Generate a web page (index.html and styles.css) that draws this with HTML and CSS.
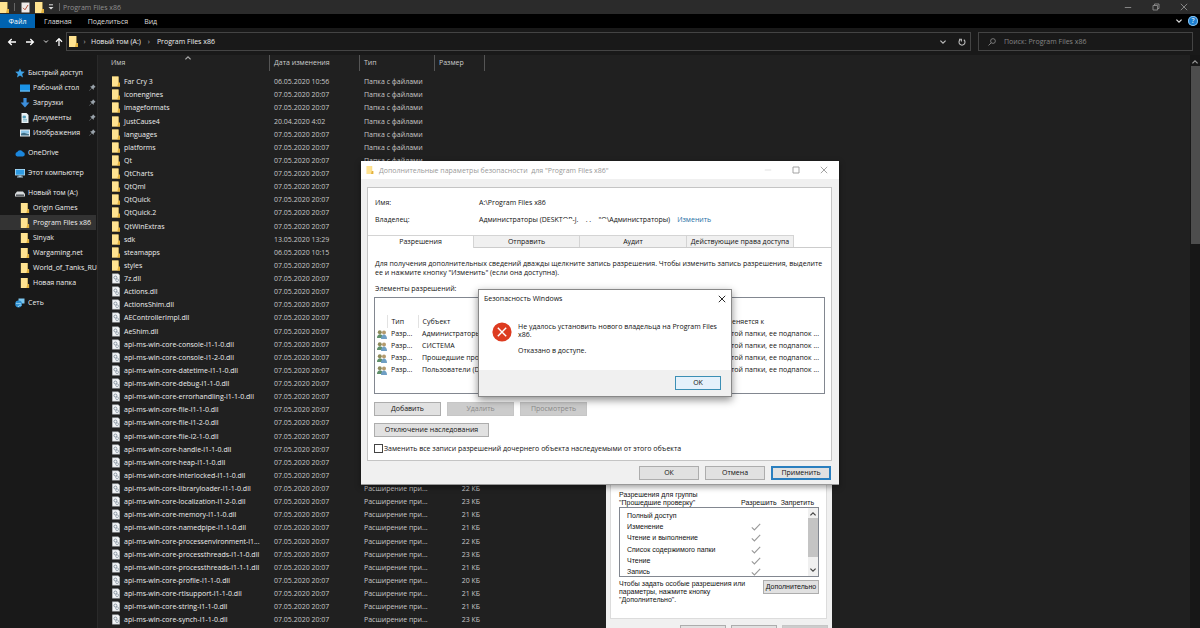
FILE: index.html
```html
<!DOCTYPE html>
<html lang="ru">
<head>
<meta charset="utf-8">
<title>Program Files x86</title>
<link rel="stylesheet" href="styles.css">
</head>
<body>
<svg class="defs" aria-hidden="true">
  <symbol id="fo" viewBox="0 0 9 11"><path d="M0 0h7.5v7H9v4H0z" fill="#f3cf6b"/><path d="M0 0h7v11H0z" fill="#ffe391"/><path d="M7 7h2v4H6z" fill="#e3b23f"/></symbol>
  <symbol id="dl" viewBox="0 0 8 10"><path d="M.3.3h6l1.4 1.4v8H.3z" fill="#f4f6f8" stroke="#aab0b6" stroke-width=".5"/><circle cx="3.4" cy="4" r="1.5" fill="none" stroke="#7f8c99" stroke-width=".9"/><circle cx="5.1" cy="6.7" r="1.4" fill="none" stroke="#8b98a5" stroke-width=".8"/></symbol>
  <symbol id="pin" viewBox="0 0 8 8"><path d="M4.6.4 7.6 3.4 6.6 3.8 5.4 5.2 5.2 6.8 3.3 4.9.6 7.6.3 7.3 3 4.6 1.2 2.8 2.9 2.6 4.2 1.4z" fill="#9aa3ab"/></symbol>
  <symbol id="usr" viewBox="0 0 10 9"><circle cx="2.8" cy="2.2" r="2" fill="#8d8a5a"/><path d="M0 8c0-5 6-5 6 0z" fill="#5f8f6a"/><circle cx="7" cy="2.4" r="2" fill="#b49a6c"/><path d="M4 9c0-6 6-6 6 0z" fill="#6f9fc4"/></symbol>
  <symbol id="x" viewBox="0 0 8 8"><path d="M.8.8 7.2 7.2M7.2.8.8 7.2" fill="none" stroke="currentColor" stroke-width=".9"/></symbol>
  <symbol id="up" viewBox="0 0 8 6"><path d="M1.4 4.4 4 1.8 6.6 4.4" fill="none" stroke="currentColor" stroke-width="1.2"/></symbol>
  <symbol id="dn" viewBox="0 0 8 6"><path d="M1.4 1.6 4 4.2 6.6 1.6" fill="none" stroke="currentColor" stroke-width="1.2"/></symbol>
  <symbol id="ar" viewBox="0 0 10 8"><path d="M1 4h7.6M5.3 1 8.4 4 5.3 7" fill="none" stroke="currentColor" stroke-width="1.3"/></symbol>
  <symbol id="ok" viewBox="0 0 10 8"><path d="M.8 4.4 3.4 7 9.2.8" fill="none" stroke="currentColor" stroke-width="1.1"/></symbol>
</svg>

<header class="titlebar">
  <svg class="fi"><use href="#fo"/></svg><span class="bar"></span>
  <svg class="fi" viewBox="0 0 9 11"><path d="M.5.5h8v10h-8z" fill="#efeae8"/><path d="M2 5.8 4 7.8 7 3" fill="none" stroke="#b4513c" stroke-width="1"/></svg>
  <svg class="fi fi-gap"><use href="#fo"/></svg>
  <svg class="qa" viewBox="0 0 6 6"><path d="M1 .8h4" stroke="#ddd"/><path d="M.5 3h5L3 5.5z" fill="#ddd"/></svg>
  <span class="bar"></span><span class="title">Program Files x86</span>
  <div class="winbtns">
    <button aria-label="Свернуть"><svg viewBox="0 0 8 8"><path d="M.8 4.5h6.4" stroke="currentColor" stroke-width=".9"/></svg></button>
    <button aria-label="Свернуть в окно"><svg viewBox="0 0 8 8"><path d="M1 2.5h4.6V7H1zM2.5 2.5V1H7v4.5H5.6" fill="none" stroke="currentColor" stroke-width=".9"/></svg></button>
    <button aria-label="Закрыть"><svg><use href="#x"/></svg></button>
  </div>
</header>

<nav class="ribbon">
  <button class="file">Файл</button><button>Главная</button><button>Поделиться</button><button>Вид</button>
  <span class="ribbon-end"><svg class="chev"><use href="#dn"/></svg><span class="help">?</span></span>
</nav>

<div class="address">
  <div class="arrows">
    <svg class="arr flip"><use href="#ar"/></svg><svg class="arr"><use href="#ar"/></svg><svg class="chev small"><use href="#dn"/></svg><svg class="arr upw"><use href="#ar"/></svg>
  </div>
  <div class="path">
    <svg class="fi"><use href="#fo"/></svg><span class="sep">›</span><span>Новый том (A:)</span><span class="sep sep-wide">›</span><span>Program Files x86</span>
    <span class="path-end"><svg class="chev"><use href="#dn"/></svg><svg class="rf" viewBox="0 0 8 8"><path d="M2.2 1.8A3 3 0 1 0 5.8 1.8M1 1.2h2.4v2.4" fill="none" stroke="currentColor" stroke-width="1.1"/></svg></span>
  </div>
  <label class="search"><svg viewBox="0 0 9 9"><circle cx="5.6" cy="3.4" r="2.7" fill="none" stroke="#999" stroke-width=".8"/><path d="M3.6 5.4.6 8.4" stroke="#999" stroke-width=".9"/></svg><input type="text" aria-label="Поиск" placeholder="Поиск: Program Files x86"></label>
</div>

<main class="main">
  <aside class="side">
    <ul>
      <li><svg class="si" viewBox="0 0 10 10"><path d="M5 .4 6.4 3.5 9.8 3.8 7.2 6 8 9.4 5 7.6 2 9.4 2.8 6 .2 3.8 3.6 3.5z" fill="#3fa3e8"/></svg>Быстрый доступ</li>
      <li class="sub"><svg class="si" viewBox="0 0 10 10"><path d="M0 1.5h10v7H0z" fill="#1b93e6"/><path d="M0 7.5h10v1H0z" fill="#7ec6f5"/></svg>Рабочий стол<svg class="pin"><use href="#pin"/></svg></li>
      <li class="sub"><svg class="si" viewBox="0 0 10 10"><path d="M3.4 0h3.2v4.5H9.4L5 9.6.6 4.5h2.8z" fill="#3c8edb"/></svg>Загрузки<svg class="pin"><use href="#pin"/></svg></li>
      <li class="sub"><svg class="si" viewBox="0 0 10 10"><path d="M1.5 0h5l2 2v8h-7z" fill="#e9f1f4"/><path d="M3 3h2.5v2H3zM3 6.4h4M3 8h4" fill="#4f9cc0" stroke="#5aa0b8" stroke-width=".7"/></svg>Документы<svg class="pin"><use href="#pin"/></svg></li>
      <li class="sub"><svg class="si" viewBox="0 0 10 10"><path d="M0 1.5h10v7H0z" fill="#e6eef2"/><path d="M1 2.5h8v3H1z" fill="#8cc6e8"/><path d="M1 7.5V5.5l3-.8 5 1.6v1.2z" fill="#3f6f88"/></svg>Изображения<svg class="pin"><use href="#pin"/></svg></li>
    </ul>
    <ul><li><svg class="si" viewBox="0 0 10 10"><path d="M2.2 8.4a2.2 2.2 0 0 1 0-4.3 3.2 3.2 0 0 1 5.8-.2 2.3 2.3 0 0 1 0 4.5z" fill="#1b86dc"/></svg>OneDrive</li></ul>
    <ul><li><svg class="si" viewBox="0 0 10 10"><path d="M0 1h10v6.4H0z" fill="#bfe3f7"/><path d="M.7 1.7h8.6v5H.7z" fill="#2f9be2"/><path d="M3.5 7.4h3v1.2h-3zM2 8.6h6v.8H2z" fill="#a8c6d8"/></svg>Этот компьютер</li></ul>
    <ul>
      <li><svg class="si" viewBox="0 0 10 10"><path d="M2 3.5h6l2 2.5v2.6H0V6z" fill="#d7dadc"/><path d="M1 6.5h8v1.4H1z" fill="#4b5054"/></svg>Новый том (A:)</li>
      <li class="sub"><svg class="si"><use href="#fo"/></svg>Origin Games</li>
      <li class="sub on"><svg class="si"><use href="#fo"/></svg>Program Files x86</li>
      <li class="sub"><svg class="si"><use href="#fo"/></svg>Sinyak</li>
      <li class="sub"><svg class="si"><use href="#fo"/></svg>Wargaming.net</li>
      <li class="sub"><svg class="si"><use href="#fo"/></svg>World_of_Tanks_RU</li>
      <li class="sub"><svg class="si"><use href="#fo"/></svg>Новая папка</li>
    </ul>
    <ul><li><svg class="si" viewBox="0 0 10 10"><path d="M3.5.5h6v5h-6z" fill="#7cc7f0"/><circle cx="3.6" cy="6" r="3.4" fill="#2e8fd0"/><path d="M1 5.2c2 1 3.5-.5 5 .8M3 9c1-2 2-2 3.4-1.6" fill="none" stroke="#bfe6fa" stroke-width=".8"/></svg>Сеть</li></ul>
  </aside>

  <section class="files">
    <table class="list">
      <thead><tr><th class="c1">Имя<svg class="sort"><use href="#up"/></svg></th><th class="c2">Дата изменения</th><th class="c3">Тип</th><th class="c4">Размер</th></tr></thead>
      <tbody>
      <tr><td><svg><use href="#fo"/></svg>Far Cry 3</td><td>06.05.2020 10:56</td><td>Папка с файлами</td><td></td></tr>
      <tr><td><svg><use href="#fo"/></svg>iconengines</td><td>07.05.2020 20:07</td><td>Папка с файлами</td><td></td></tr>
      <tr><td><svg><use href="#fo"/></svg>imageformats</td><td>07.05.2020 20:07</td><td>Папка с файлами</td><td></td></tr>
      <tr><td><svg><use href="#fo"/></svg>JustCause4</td><td>20.04.2020 4:02</td><td>Папка с файлами</td><td></td></tr>
      <tr><td><svg><use href="#fo"/></svg>languages</td><td>07.05.2020 20:07</td><td>Папка с файлами</td><td></td></tr>
      <tr><td><svg><use href="#fo"/></svg>platforms</td><td>07.05.2020 20:07</td><td>Папка с файлами</td><td></td></tr>
      <tr><td><svg><use href="#fo"/></svg>Qt</td><td>07.05.2020 20:07</td><td>Папка с файлами</td><td></td></tr>
      <tr><td><svg><use href="#fo"/></svg>QtCharts</td><td>07.05.2020 20:07</td><td></td><td></td></tr>
      <tr><td><svg><use href="#fo"/></svg>QtQml</td><td>07.05.2020 20:07</td><td></td><td></td></tr>
      <tr><td><svg><use href="#fo"/></svg>QtQuick</td><td>07.05.2020 20:07</td><td></td><td></td></tr>
      <tr><td><svg><use href="#fo"/></svg>QtQuick.2</td><td>07.05.2020 20:07</td><td></td><td></td></tr>
      <tr><td><svg><use href="#fo"/></svg>QtWinExtras</td><td>07.05.2020 20:07</td><td></td><td></td></tr>
      <tr><td><svg><use href="#fo"/></svg>sdk</td><td>13.05.2020 13:29</td><td></td><td></td></tr>
      <tr><td><svg><use href="#fo"/></svg>steamapps</td><td>06.05.2020 10:15</td><td></td><td></td></tr>
      <tr><td><svg><use href="#fo"/></svg>styles</td><td>07.05.2020 20:07</td><td></td><td></td></tr>
      <tr><td><svg><use href="#dl"/></svg>7z.dll</td><td>07.05.2020 20:07</td><td></td><td></td></tr>
      <tr><td><svg><use href="#dl"/></svg>Actions.dll</td><td>07.05.2020 20:07</td><td></td><td></td></tr>
      <tr><td><svg><use href="#dl"/></svg>ActionsShim.dll</td><td>07.05.2020 20:07</td><td></td><td></td></tr>
      <tr><td><svg><use href="#dl"/></svg>AEControllerImpl.dll</td><td>07.05.2020 20:07</td><td></td><td></td></tr>
      <tr><td><svg><use href="#dl"/></svg>AeShim.dll</td><td>07.05.2020 20:07</td><td></td><td></td></tr>
      <tr><td><svg><use href="#dl"/></svg>api-ms-win-core-console-l1-1-0.dll</td><td>07.05.2020 20:07</td><td></td><td></td></tr>
      <tr><td><svg><use href="#dl"/></svg>api-ms-win-core-console-l1-2-0.dll</td><td>07.05.2020 20:07</td><td></td><td></td></tr>
      <tr><td><svg><use href="#dl"/></svg>api-ms-win-core-datetime-l1-1-0.dll</td><td>07.05.2020 20:07</td><td></td><td></td></tr>
      <tr><td><svg><use href="#dl"/></svg>api-ms-win-core-debug-l1-1-0.dll</td><td>07.05.2020 20:07</td><td></td><td></td></tr>
      <tr><td><svg><use href="#dl"/></svg>api-ms-win-core-errorhandling-l1-1-0.dll</td><td>07.05.2020 20:07</td><td></td><td></td></tr>
      <tr><td><svg><use href="#dl"/></svg>api-ms-win-core-file-l1-1-0.dll</td><td>07.05.2020 20:07</td><td></td><td></td></tr>
      <tr><td><svg><use href="#dl"/></svg>api-ms-win-core-file-l1-2-0.dll</td><td>07.05.2020 20:07</td><td></td><td></td></tr>
      <tr><td><svg><use href="#dl"/></svg>api-ms-win-core-file-l2-1-0.dll</td><td>07.05.2020 20:07</td><td></td><td></td></tr>
      <tr><td><svg><use href="#dl"/></svg>api-ms-win-core-handle-l1-1-0.dll</td><td>07.05.2020 20:07</td><td></td><td></td></tr>
      <tr><td><svg><use href="#dl"/></svg>api-ms-win-core-heap-l1-1-0.dll</td><td>07.05.2020 20:07</td><td></td><td></td></tr>
      <tr><td><svg><use href="#dl"/></svg>api-ms-win-core-interlocked-l1-1-0.dll</td><td>07.05.2020 20:07</td><td></td><td></td></tr>
      <tr><td><svg><use href="#dl"/></svg>api-ms-win-core-libraryloader-l1-1-0.dll</td><td>07.05.2020 20:07</td><td>Расширение при...</td><td>22 КБ</td></tr>
      <tr><td><svg><use href="#dl"/></svg>api-ms-win-core-localization-l1-2-0.dll</td><td>07.05.2020 20:07</td><td>Расширение при...</td><td>23 КБ</td></tr>
      <tr><td><svg><use href="#dl"/></svg>api-ms-win-core-memory-l1-1-0.dll</td><td>07.05.2020 20:07</td><td>Расширение при...</td><td>21 КБ</td></tr>
      <tr><td><svg><use href="#dl"/></svg>api-ms-win-core-namedpipe-l1-1-0.dll</td><td>07.05.2020 20:07</td><td>Расширение при...</td><td>21 КБ</td></tr>
      <tr><td><svg><use href="#dl"/></svg>api-ms-win-core-processenvironment-l1...</td><td>07.05.2020 20:07</td><td>Расширение при...</td><td>22 КБ</td></tr>
      <tr><td><svg><use href="#dl"/></svg>api-ms-win-core-processthreads-l1-1-0.dll</td><td>07.05.2020 20:07</td><td>Расширение при...</td><td>23 КБ</td></tr>
      <tr><td><svg><use href="#dl"/></svg>api-ms-win-core-processthreads-l1-1-1.dll</td><td>07.05.2020 20:07</td><td>Расширение при...</td><td>21 КБ</td></tr>
      <tr><td><svg><use href="#dl"/></svg>api-ms-win-core-profile-l1-1-0.dll</td><td>07.05.2020 20:07</td><td>Расширение при...</td><td>20 КБ</td></tr>
      <tr><td><svg><use href="#dl"/></svg>api-ms-win-core-rtlsupport-l1-1-0.dll</td><td>07.05.2020 20:07</td><td>Расширение при...</td><td>21 КБ</td></tr>
      <tr><td><svg><use href="#dl"/></svg>api-ms-win-core-string-l1-1-0.dll</td><td>07.05.2020 20:07</td><td>Расширение при...</td><td>21 КБ</td></tr>
      <tr><td><svg><use href="#dl"/></svg>api-ms-win-core-synch-l1-1-0.dll</td><td>07.05.2020 20:07</td><td>Расширение при...</td><td>23 КБ</td></tr>
      </tbody>
    </table>
  </section>
  <div class="scroll"><svg class="chev"><use href="#up"/></svg><div class="thumb"></div></div>
</main>

<section class="win props">
  <div class="props-page">
    <div class="props-head"><p>Разрешения для группы<br>"Прошедшие проверку"</p><span>Разрешить</span><span>Запретить</span></div>
    <div class="perm">
      <ul>
        <li>Полный доступ</li>
        <li>Изменение<svg><use href="#ok"/></svg></li>
        <li>Чтение и выполнение<svg><use href="#ok"/></svg></li>
        <li>Список содержимого папки<svg><use href="#ok"/></svg></li>
        <li>Чтение<svg><use href="#ok"/></svg></li>
        <li>Запись<svg><use href="#ok"/></svg></li>
      </ul>
      <div class="perm-scroll"><svg class="chev"><use href="#up"/></svg><div class="perm-thumb"></div><svg class="chev"><use href="#dn"/></svg></div>
    </div>
    <div class="props-more"><p>Чтобы задать особые разрешения или<br>параметры, нажмите кнопку<br>"Дополнительно".</p><button class="btn">Дополнительно</button></div>
  </div>
  <div class="props-foot"><button class="btn" aria-label="ОК"></button><button class="btn" aria-label="Отмена"></button><button class="btn off" aria-label="Применить" disabled></button></div>
</section>

<section class="win adv">
  <div class="adv-title"><svg class="fi"><use href="#fo"/></svg><span>Дополнительные параметры безопасности&nbsp; для "Program Files x86"</span>
    <div class="winbtns">
      <button aria-label="Свернуть" class="faint"><svg viewBox="0 0 8 8"><path d="M.8 4h6.4" stroke="currentColor" stroke-width=".8"/></svg></button>
      <button aria-label="Развернуть"><svg viewBox="0 0 8 8"><path d="M1 1h6v6H1z" fill="none" stroke="currentColor" stroke-width=".9"/></svg></button>
      <button aria-label="Закрыть"><svg><use href="#x"/></svg></button>
    </div>
  </div>
  <div class="adv-page">
    <dl class="info">
      <dt>Имя:</dt><dd>A:\Program Files x86</dd>
      <dt>Владелец:</dt><dd>Администраторы (DESKT<span class="scrub">OP</span>-J.&nbsp;&nbsp;&nbsp; . .&nbsp;&nbsp;&nbsp; <span class="scrub">"Q</span>\Администраторы)<a href="#">Изменить</a></dd>
    </dl>
    <div class="tabs"><button class="cur">Разрешения</button><button>Отправить</button><button>Аудит</button><button>Действующие права доступа</button></div>
    <div class="adv-body">
      <p>Для получения дополнительных сведений дважды щелкните запись разрешения. Чтобы изменить запись разрешения, выделите<br>ее и нажмите кнопку "Изменить" (если она доступна).</p>
      <p class="lbl">Элементы разрешений:</p>
      <div class="acl">
        <table>
          <thead><tr><th class="a0"></th><th class="a1">Тип</th><th class="a2">Субъект</th><th>Применяется к</th></tr></thead>
          <tbody>
            <tr><td><svg><use href="#usr"/></svg></td><td>Разр...</td><td>Администраторы</td><td>Для этой папки, ее подпапок ...</td></tr>
            <tr><td><svg><use href="#usr"/></svg></td><td>Разр...</td><td>СИСТЕМА</td><td>Для этой папки, ее подпапок ...</td></tr>
            <tr><td><svg><use href="#usr"/></svg></td><td>Разр...</td><td>Прошедшие проверку</td><td>Для этой папки, ее подпапок ...</td></tr>
            <tr><td><svg><use href="#usr"/></svg></td><td>Разр...</td><td>Пользователи (DESKTOP)</td><td>Для этой папки, ее подпапок ...</td></tr>
          </tbody>
        </table>
      </div>
      <div class="row"><button class="btn">Добавить</button><button class="btn off" disabled>Удалить</button><button class="btn off" disabled>Просмотреть</button></div>
      <div class="row"><button class="btn wide">Отключение наследования</button></div>
      <label class="check"><input type="checkbox">Заменить все записи разрешений дочернего объекта наследуемыми от этого объекта</label>
    </div>
  </div>
  <div class="adv-foot"><button class="btn">ОК</button><button class="btn">Отмена</button><button class="btn def">Применить</button></div>
</section>

<section class="win msg" role="alertdialog" aria-label="Безопасность Windows">
  <div class="msg-title"><span>Безопасность Windows</span><button aria-label="Закрыть"><svg><use href="#x"/></svg></button></div>
  <div class="msg-body">
    <svg viewBox="0 0 20 20"><circle cx="10" cy="10" r="9.6" fill="#dd3b20"/><path d="M5.8 5.8 14.2 14.2M14.2 5.8 5.8 14.2" stroke="#fff" stroke-width="1.4"/></svg>
    <div class="msg-text"><p>Не удалось установить нового владельца на Program Files<br>x86.</p><p>Отказано в доступе.</p></div>
  </div>
  <div class="msg-foot"><button class="btn hot">OK</button></div>
</section>
</body>
</html>
```
FILE: styles.css
```css
* { box-sizing: border-box; }
body {
  margin: 0;
  height: 100vh;
  overflow: hidden;
  display: flex;
  flex-direction: column;
  background: #202020;
  color: #eee;
  font: 7px/13px "Open Sans", "Noto Sans", sans-serif;
  white-space: nowrap;
}
p, ul, dl, dd { margin: 0; padding: 0; }
ul { list-style: none; }
button { margin: 0; padding: 0; border: 0; background: none; color: inherit; font: inherit; }
svg { display: block; flex: none; }
a { color: #1d6fa5; text-decoration: none; }
.defs { position: absolute; width: 0; height: 0; }
.fi { width: 9px; height: 11px; }
.chev { width: 8px; height: 6px; }

/* Explorer chrome */
.titlebar { flex: none; height: 14px; display: flex; align-items: center; background: #2b2b2b; color: #8f8f8f; }
.bar { width: 1px; height: 8px; margin: 0 6px 0 5px; background: #666; }
.fi-gap { margin-left: 5px; }
.qa { width: 6px; height: 6px; margin-left: 4px; }
.title { margin-left: -3px; }
.winbtns { margin-left: auto; display: flex; }
.winbtns button { width: 28px; display: flex; justify-content: center; }
.winbtns svg { width: 8px; height: 8px; }
.titlebar .winbtns { padding-right: 2px; }
.ribbon { flex: none; height: 14px; display: flex; align-items: center; background: #000; color: #ddd; }
.ribbon button { height: 14px; margin-right: 16px; }
.ribbon .file { width: 35px; margin-right: 9px; background: #0063b1; color: #fff; }
.ribbon-end { margin-left: auto; display: flex; align-items: center; gap: 5px; padding-right: 2px; }
.help { width: 10px; height: 10px; border-radius: 50%; background: #1d7fd0; color: #fff; line-height: 10px; text-align: center; box-shadow: 0 0 0 1px #8cc4ee inset; }
.address { flex: none; height: 27px; display: flex; align-items: center; gap: 7px; padding-right: 7px; background: #191919; }
.arrows { width: 59px; display: flex; align-items: center; padding-left: 7px; gap: 8px; color: #fff; }
.arr { width: 10px; height: 8px; }
.flip { transform: scaleX(-1); }
.upw { transform: rotate(-90deg); margin-left: -3px; }
.small { width: 6px; height: 5px; }
.path, .search { height: 19px; display: flex; align-items: center; border: 1px solid #444; background: #191919; }
.path { flex: 1; padding-left: 2px; }
.sep { width: 13px; text-align: center; color: #bbb; }
.sep-wide { width: 16px; }
.path-end { margin-left: auto; display: flex; align-items: center; gap: 11px; padding-right: 4px; color: #bbb; }
.rf { width: 8px; height: 8px; }
.search { width: 215px; padding-left: 9px; gap: 8px; }
.search svg { width: 8px; height: 8px; }
.search input { flex: 1; min-width: 0; padding: 0; border: 0; outline: 0; background: none; color: #ddd; font: inherit; }
.search input::placeholder { color: #858585; opacity: 1; }
.main { flex: 1; min-height: 0; display: flex; }

/* Navigation pane */
.side { width: 98px; flex: none; padding: 10px 1px 0 0; background: #191919; border-right: 1px solid #2a2a2a; overflow: hidden; }
.side ul { margin-bottom: 5px; }
.side li { height: 15px; display: flex; align-items: center; padding-left: 15px; gap: 3px; }
.side .sub { padding-left: 20px; }
.side .on { background: #333; }
.si { width: 10px; height: 10px; }
.pin { width: 7px; height: 7px; margin-left: auto; }

/* File list */
.files { flex: 1; min-width: 0; padding-left: 10px; overflow: hidden; }
.list { width: 377px; table-layout: fixed; border-collapse: collapse; }
.list th { position: relative; height: 20px; padding: 0 0 4px 4px; text-align: left; font-weight: 400; line-height: 16px; color: #ccc; background: linear-gradient(#555, #555) right top / 1px 16px no-repeat; }
.c1 { width: 162px; }
.c2 { width: 90px; }
.c3 { width: 75px; }
.list .c1 { padding-left: 3px; }
.sort { position: absolute; left: 76px; top: 0; width: 8px; height: 6px; color: #aaa; }
.list td { height: 13px; padding: 0 0 0 4px; line-height: 13px; color: #c8c8c8; overflow: hidden; }
.list tr:nth-child(8n+4) td { height: 14px; }
.list td:first-child { color: #eee; display: flex; align-items: center; gap: 4px; }
.list td:last-child { padding-right: 5px; text-align: right; }
.list td svg { width: 8px; height: 11px; }
.scroll { width: 10px; flex: none; display: flex; flex-direction: column; align-items: center; padding-top: 4px; gap: 1px; background: #171717; color: #999; }
.thumb { width: 9px; height: 178px; background: #4d4d4d; }

/* Windows on the desktop */
.win { position: absolute; background: #f0f0f0; color: #111; }
.btn { height: 14px; border: 1px solid #adadad; background: #e1e1e1; color: #111; line-height: 12px; text-align: center; }
.btn.off { border-color: #c6c6c6; background: #ccc; color: #8a8a8a; }

.props { left: 606px; top: 479px; width: 226px; padding: 0 5px 0 4px; font: 7px/8px "Liberation Sans", Arial, sans-serif; }
.props-page { height: 140px; padding: 11px 7px 0 8px; background: #fff; border: 1px solid #dcdcdc; }
.props-head { display: flex; align-items: flex-end; gap: 4px; }
.props-head p { width: 118px; }
.perm { height: 70px; display: flex; border: 1px solid #828790; overflow: hidden; }
.perm ul { flex: 1; padding-top: 2px; }
.perm li { height: 11px; display: flex; align-items: center; padding: 0 47px 0 7px; }
.perm li:nth-child(3n) { height: 12px; }
.perm li svg { width: 10px; height: 8px; margin-left: auto; color: #999; }
.perm-scroll { width: 10px; display: flex; flex-direction: column; align-items: center; justify-content: space-between; padding: 3px 0; color: #444; background: #f0f0f0; }
.perm-thumb { width: 10px; height: 39px; margin-bottom: 9px; background: #c4c4c4; }
.props-more { display: flex; align-items: flex-start; justify-content: space-between; padding-top: 3px; }
.props-more .btn { width: 56px; }
.props-foot { display: flex; gap: 5px; justify-content: flex-end; padding-top: 6px; margin-right: -1px; }
.props-foot .btn { width: 46px; }

.adv { left: 361px; top: 161px; width: 478px; padding-bottom: 4px; border-bottom: 1px solid #999; box-shadow: 0 2px 6px rgba(0, 0, 0, .4); }
.adv-title { height: 18px; display: flex; align-items: center; gap: 5px; padding: 0 1px 0 5px; background: #fff; color: #999; }
.adv-title .fi { width: 8px; height: 8px; }
.faint { opacity: .35; }
.adv-page { margin: 8px 7px 0 6px; background: #fff; border: 1px solid #c4c4c4; }
.info { display: grid; grid-template-columns: 104px 1fr; row-gap: 4px; padding: 8px 7px 9px; }
.info a { margin-left: 7px; }
.scrub { position: relative; }
.scrub::after { content: ""; position: absolute; left: 0; right: 0; bottom: 0; height: 5px; background: #fff; }
.tabs { display: flex; border-bottom: 1px solid #ccc; }
.tabs button { width: 106px; height: 12px; line-height: 12px; background: #f0f0f0; border: 1px solid #d4d4d4; border-width: 1px 1px 0 0; }
.tabs button:nth-child(n+3) { width: 107px; }
.tabs .cur { background: #fff; margin-bottom: -1px; height: 13px; }
.adv-body { padding: 11px 6px 7px; line-height: 9px; }
.adv-body p { padding-left: 1px; }
.adv-body .lbl { margin-top: 7px; }
.acl { height: 97px; margin-top: 4px; padding-top: 17px; border: 1px solid #828790; }
.acl table { width: 100%; table-layout: fixed; border-collapse: collapse; line-height: 12px; }
.acl th { height: 13px; padding: 0 0 0 4px; font-weight: 400; text-align: left; border-left: 1px solid #e2e2e2; }
.acl th:first-child, .acl th:last-child { border: 0; }
.acl td { height: 12px; padding: 0 0 0 4px; }
.acl td:first-child { padding-left: 2px; }
.acl td svg { width: 10px; height: 9px; }
.a0 { width: 12px; }
.a1 { width: 31px; }
.a2 { width: 291px; }
.row { display: flex; gap: 6px; margin-top: 7px; }
.acl + .row { margin-top: 8px; }
.row .btn { width: 67px; }
.row .wide { width: 115px; }
.check { display: flex; align-items: center; gap: 1px; margin-top: 7px; }
.check input { appearance: none; width: 9px; height: 9px; margin: 0; border: 1px solid #444; background: #fff; }
.adv-foot { display: flex; justify-content: flex-end; gap: 6px; padding: 5px 8px 0 0; }
.adv-foot .btn { width: 60px; }
.adv-foot .def { border: 2px solid #2a7fbf; line-height: 10px; }

.msg { left: 478px; top: 289px; width: 254px; border: 1px solid #888; background: #fff; box-shadow: 0 3px 8px rgba(0, 0, 0, .45); }
.msg-title { height: 17px; display: flex; align-items: center; justify-content: space-between; padding: 0 5px; }
.msg-title svg { width: 8px; height: 8px; }
.msg-body { height: 63px; display: flex; gap: 6px; padding: 15px 13px 0; line-height: 8px; }
.msg-body svg { width: 20px; height: 20px; }
.msg-text { padding-top: 1px; }
.msg-body p { margin-bottom: 8px; }
.msg-foot { display: flex; justify-content: flex-end; padding: 6px 10px; background: #f0f0f0; }
.msg-foot .btn { width: 46px; border-color: #3c8fb5; background: #e5f1fb; }
```
